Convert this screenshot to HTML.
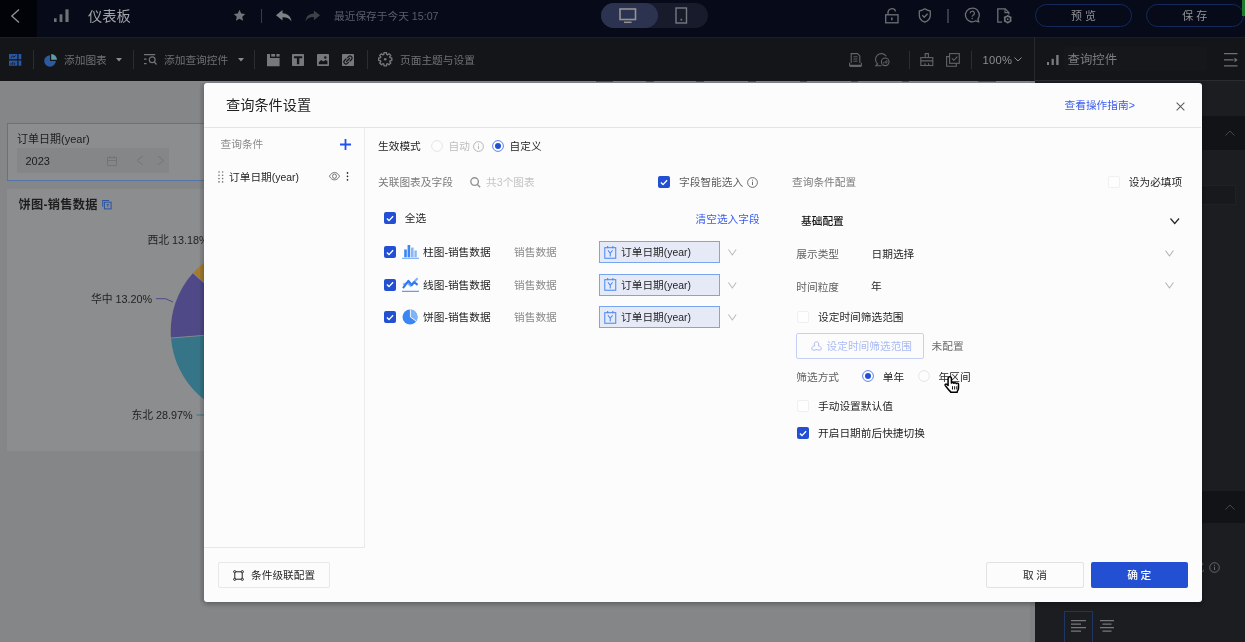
<!DOCTYPE html>
<html lang="zh-CN">
<head>
<meta charset="utf-8">
<title>仪表板</title>
<style>
*{box-sizing:border-box;margin:0;padding:0}
html,body{width:1245px;height:642px;overflow:hidden;background:#858688}
body{position:relative;will-change:transform;font-family:"Liberation Sans","Noto Sans CJK SC",sans-serif;font-size:10.7px;color:#222}
.a{position:absolute}
.t{position:absolute;white-space:nowrap;line-height:16px;height:16px;font-size:10.7px}
svg{position:absolute;overflow:visible}
/* top bar */
#topbar{left:0;top:0;width:1245px;height:37px;background:#060a19}
#back{left:0;top:0;width:37px;height:37px;background:#020308}
#toolbar{left:0;top:37px;width:1245px;height:44px;background:#141519;border-top:1px solid #1a1e2e}
.sep{position:absolute;width:1px;background:#2c2d32}
.tb{color:#707175}
/* right panel */
#rpanel{left:1035px;top:37px;width:210px;height:605px;background:#1c1d21}
/* modal */
#modal{left:204px;top:83px;width:998px;height:519px;background:#fcfcfc;border-radius:3px;box-shadow:0 2px 5px rgba(0,0,0,.32)}
.cb{position:absolute;width:12px;height:12px;border-radius:2px}
.cb.on{background:#2350d2}
.cb.off{background:#fefefe;border:1px solid #f0f0f0}
.g{color:#7b7b7b}
.sel{position:absolute;left:599px;width:121px;height:22px;background:#e6e9f6;border:1px solid #78a4f4}
</style>
</head>
<body>
<!-- canvas widgets -->
<div class="a" id="widget" style="left:7px;top:123px;width:200px;height:58px;background:#8c8d8f;border:1px solid #5474a8"></div>
<div class="a" style="left:17px;top:148px;width:152px;height:25px;background:#858688"></div>
<div class="t" style="left:17px;top:130.600px;font-size:11px;color:#1c1c1c">订单日期(year)</div>
<div class="t" style="left:25.5px;top:153px;font-size:11px;color:#1c1c1c">2023</div>
<svg style="left:106px;top:155px" width="12" height="12" viewBox="0 0 12 12" fill="none" stroke="#737477" stroke-width="1"><rect x="1.5" y="2.5" width="9" height="8"/><path d="M1.5 5.5h9M4 1v2.5M8 1v2.5"/></svg>
<svg style="left:136px;top:155px" width="30" height="12" viewBox="0 0 30 12" fill="none" stroke="#737477" stroke-width="1"><path d="M6.800 1L1.200 5.500l5.600 4.500M22 1l5.600 4.500L22 10"/></svg>

<div class="a" id="piecard" style="left:7px;top:189px;width:200.500px;height:261.500px;background:#8c8d8f"></div>
<div class="t" style="left:18.500px;top:197.300px;font-size:12.200px;letter-spacing:.28px;font-weight:700;color:#1d1d1d">饼图-销售数据</div>
<svg style="left:102px;top:199.800px" width="9.800" height="9.400" viewBox="0 0 11 11" fill="none" stroke="#2a55a0" stroke-width="1.200"><path d="M0.600 8V0.600H8"/><rect x="2.600" y="2.600" width="7.800" height="7.800"/><path d="M5 5.300h3M6.500 5.300v3" stroke-width="1"/></svg>
<svg style="left:0;top:0" width="1245" height="642" viewBox="0 0 1245 642">
  <g id="pie">
    <path d="M257.700 331 L193 273 A87 87 0 0 1 257.700 244 Z" fill="#a37c2f"/>
    <path d="M257.700 331 L171 338 A87 87 0 0 1 193 273 Z" fill="#4f4a87"/>
    <path d="M257.700 331 L257.700 418 A87 87 0 0 1 171 338 Z" fill="#367588"/>
    <path d="M257.700 331 L193 273 M257.700 331 L171 338" stroke="#8c8d8f" stroke-width="0.800"/>
    <path d="M156 298.700H165.500L173 302" fill="none" stroke="#4f4a87" stroke-width="1"/>
    <path d="M196.500 415H206" fill="none" stroke="#367588" stroke-width="1"/>
  </g>
</svg>
<div class="t" style="left:147.500px;top:232px;font-size:10.800px;color:#222">西北 13.18%</div>
<div class="t" style="left:91px;top:290.500px;font-size:10.800px;color:#222">华中 13.20%</div>
<div class="t" style="left:131.500px;top:406.500px;font-size:10.800px;color:#222">东北 28.97%</div>
<div class="a" style="left:1030px;top:81px;width:5px;height:561px;background:#7f8082"></div>
<div class="a" style="left:199.500px;top:83px;width:5px;height:519px;background:rgba(0,0,0,.05)"></div>

<div class="a" style="left:596px;top:81px;width:17px;height:1px;background:#55565a"></div><div class="a" style="left:646px;top:81px;width:8px;height:1px;background:#55565a"></div><div class="a" style="left:696px;top:81px;width:8px;height:1px;background:#55565a"></div><div class="a" style="left:748px;top:81px;width:8px;height:1px;background:#55565a"></div><div class="a" style="left:800px;top:81px;width:7px;height:1px;background:#55565a"></div><div class="a" style="left:851px;top:81px;width:7px;height:1px;background:#55565a"></div><div class="a" style="left:902px;top:81px;width:7px;height:1px;background:#55565a"></div><div class="a" style="left:978px;top:81px;width:18px;height:1px;background:#55565a"></div>
<!-- TOPBAR -->
<div class="a" id="topbar"></div>
<div class="a" id="back"></div>
<svg style="left:10px;top:8px" width="12" height="16" viewBox="0 0 12 16" fill="none" stroke="#939496" stroke-width="1.300"><path d="M9 1.500L1.800 8L9 14.500"/></svg>
<svg style="left:54px;top:8.500px" width="16" height="14" viewBox="0 0 16 14" fill="#707175"><rect x="0" y="9.300" width="2.600" height="3.700"/><rect x="5.600" y="5.300" width="2.800" height="7.700"/><rect x="11.400" y="0.300" width="3.200" height="12.700"/></svg>
<div class="t" style="left:88px;top:8px;font-size:14.200px;color:#a4a5a8">仪表板</div>
<svg style="left:232.700px;top:8.700px" width="13" height="13" viewBox="0 0 24 24" fill="#737479"><path d="M12 1.500l3.200 6.900 7.400.9-5.500 5.100 1.500 7.400L12 18.100l-6.600 3.700 1.500-7.400L1.400 9.300l7.400-.9z"/></svg>
<div class="sep" style="left:261px;top:8.500px;height:14px;background:#3b3e4a"></div>
<svg style="left:276.200px;top:9.500px" width="16" height="12" viewBox="0 0 16 12" fill="#808186"><path d="M6.500 0L0 5.200l6.500 5.200V7.200c4-.2 6.800 1 9 4.300C15 6.500 12 3.500 6.500 3.200z"/></svg>
<svg style="left:305px;top:9.700px" width="15" height="12" viewBox="0 0 16 12" fill="#404148"><path d="M9.500 0L16 5.200 9.500 10.400V7.200c-4-.2-6.800 1-9 4.300C1 6.500 4 3.500 9.500 3.200z"/></svg>
<div class="t" style="left:334px;top:8.200px;color:#5c5f6b">最近保存于今天 15:07</div>
<div class="a" style="left:600.500px;top:3px;width:107.500px;height:25px;border-radius:12.500px;background:#171b2c"></div>
<div class="a" style="left:600.500px;top:3px;width:57.500px;height:25px;border-radius:12.500px;background:#2b3351"></div>
<svg style="left:619px;top:7.500px" width="18" height="16" viewBox="0 0 18 16" fill="none" stroke="#959390" stroke-width="1.600"><rect x="1" y="1" width="15.500" height="10.500"/><path d="M5 14.300h7.600" stroke-width="1.500"/></svg>
<svg style="left:675px;top:7px" width="13" height="17" viewBox="0 0 13 17" fill="none" stroke="#77797f" stroke-width="1.400"><rect x="1" y="1" width="10.500" height="15"/><path d="M5.200 12.700h2.200M6.300 11.600v2.200" stroke-width="0.800"/></svg>
<svg style="left:884px;top:8px" width="16" height="16" viewBox="0 0 16 16" fill="none" stroke="#6f7074" stroke-width="1.300"><rect x="1.700" y="6.800" width="12.300" height="8"/><path d="M4 6.800V4.600a3.900 3.900 0 0 1 7.600-1.200"/><path d="M7.850 9.400v2.800" stroke-width="1.500"/></svg>
<svg style="left:918px;top:8px" width="14" height="15" viewBox="0 0 14 15" fill="none" stroke="#6f7074" stroke-width="1.300"><path d="M6.800.8c1.600 1.200 3.400 1.900 5.500 2.200v4.400c0 3-2.200 5.300-5.500 6.700C3.500 12.700 1.300 10.400 1.300 7.400V3C3.400 2.700 5.200 2 6.800.8z" stroke-linejoin="round"/><path d="M4.300 7.300l1.900 1.900 3.400-3.500"/></svg>
<div class="sep" style="left:947.300px;top:8.500px;height:14px;background:#3a3b41;width:1.300px"></div>
<svg style="left:964px;top:7.200px" width="17" height="17" viewBox="0 0 17 17" fill="none" stroke="#6f7074" stroke-width="1.300"><path d="M8.200 1.200a6.800 6.800 0 1 0 3.600 12.600l3 1.200-.9-3A6.800 6.800 0 0 0 8.200 1.200z" stroke-linejoin="round"/><path d="M6.200 6.300a2.100 2.100 0 1 1 3 1.900c-.7.400-1 .8-1 1.600" stroke-width="1.200"/><circle cx="8.200" cy="11.500" r=".75" fill="#6f7074" stroke="none"/></svg>
<svg style="left:997px;top:8px" width="16" height="16" viewBox="0 0 16 16" fill="none" stroke="#6f7074" stroke-width="1.300"><path d="M5 14.200H.8V.8h7.400l3.600 3.600v2"/><path d="M8 .8v3.800h3.800" stroke-width="1.100"/><circle cx="10.700" cy="11.200" r="3" stroke-width="1.500"/><circle cx="10.700" cy="11.200" r=".9" fill="#6f7074" stroke="none"/><path d="M10.700 6.900v1.300M10.700 14.200v1.300M7 9l1.100.7M13.300 12.700l1.100.7M7 13.400l1.100-.7M13.300 9.700l1.100-.7" stroke-width="1.500"/></svg>
<div class="a" style="left:1035px;top:4px;width:97px;height:23px;border-radius:11.500px;border:1px solid #14295c"></div>
<div class="t" style="left:1035px;top:7.500px;width:97px;text-align:center;color:#939497;font-size:11px;letter-spacing:3px;text-indent:3px">预览</div>
<div class="a" style="left:1146px;top:4px;width:97.500px;height:23px;border-radius:11.500px;border:1px solid #14295c"></div>
<div class="t" style="left:1146px;top:7.500px;width:97.500px;text-align:center;color:#939497;font-size:11px;letter-spacing:3px;text-indent:3px">保存</div>
<div class="a" style="left:1242px;top:0;width:3px;height:16px;background:#1f7a2c"></div>
<!-- TOOLBAR -->
<div class="a" id="toolbar"></div>
<svg style="left:8.700px;top:54px" width="13" height="12" viewBox="0 0 13 12"><g fill="#2a57a3"><rect x="0" y="0" width="8.300" height="5.200"/><rect x="9.500" y="0" width="2.800" height="5.200"/><rect x="0" y="6.500" width="8.300" height="5.200"/><rect x="9.500" y="6.500" width="2.800" height="5.200"/></g><path d="M1.800 3.700l1.800-1.600 1.300 1 1.800-1.700" fill="none" stroke="#141519" stroke-width=".9"/><path d="M2 10.800V9M3.800 10.800V8M5.600 10.800V8.600" stroke="#141519" stroke-width=".8"/></svg>
<div class="sep" style="left:32.700px;top:50px;height:18.500px"></div>
<svg style="left:44px;top:53.500px" width="14" height="13" viewBox="0 0 14 13"><path d="M6 1.200A5.800 5.800 0 1 0 11.800 7H6z" fill="#2c5aa0"/><path d="M7.200 0v5.800H13A5.800 5.800 0 0 0 7.200 0z" fill="#5a9fa8"/></svg>
<div class="t tb" style="left:64px;top:52px">添加图表</div>
<svg style="left:116px;top:57.500px" width="6" height="4" viewBox="0 0 6 4"><path d="M0 0h6L3 3.600z" fill="#8a8b8f"/></svg>
<div class="sep" style="left:132.500px;top:50px;height:18.500px"></div>
<svg style="left:143.800px;top:54.200px" width="13" height="12" viewBox="0 0 13 12" fill="none" stroke="#737478" stroke-width="1.200"><path d="M0 .6h11.200M0 5.100h2.600M0 9.600h2.600"/><circle cx="8.200" cy="5.800" r="2.900"/><path d="M10.300 8l2.300 2.500"/></svg>
<div class="t tb" style="left:164px;top:52px">添加查询控件</div>
<svg style="left:237.500px;top:57.500px" width="6" height="4" viewBox="0 0 6 4"><path d="M0 0h6L3 3.600z" fill="#8a8b8f"/></svg>
<div class="sep" style="left:254.300px;top:50px;height:18.500px"></div>
<svg style="left:266.500px;top:53.500px" width="12.600" height="12.200" viewBox="0 0 12.600 12.200" fill="#77787c"><path d="M0 0h3v3.900h9.600v8.300H0z"/><rect x="4.200" y="0" width="3.900" height="2.600"/><rect x="9.400" y="0" width="3.200" height="2.600"/></svg>
<svg style="left:292px;top:53.700px" width="12" height="12" viewBox="0 0 12 12"><rect width="12" height="12" rx=".8" fill="#77787c"/><path d="M2 2.200h8.200v2.100H7.300v6H4.900v-6H2z" fill="#141519"/></svg>
<svg style="left:317px;top:53.700px" width="12" height="12" viewBox="0 0 12 12"><rect width="12" height="12" rx=".8" fill="#77787c"/><path d="M1.800 10.200V8.300l2.400-2.200 2 1.500 2.400-1.600 1.800.9v3.300z" fill="#141519"/><circle cx="8.300" cy="3.500" r="1.200" fill="#141519"/></svg>
<svg style="left:342px;top:53.700px" width="12" height="12" viewBox="0 0 12 12"><rect width="12" height="12" rx=".8" fill="#77787c"/><g fill="none" stroke="#141519" stroke-width="1.250" stroke-linecap="round"><path d="M5.600 3.600l1-1a2.050 2.050 0 0 1 2.900 2.900L8 7M6.400 8.400l-1 1a2.050 2.050 0 0 1-2.900-2.900L4 5M4.500 7.500l3-3"/></g></svg>
<div class="sep" style="left:366.800px;top:50px;height:18.500px"></div>
<svg style="left:377.700px;top:52.400px" width="14.500" height="14.500" viewBox="0 0 14.500 14.500" fill="none" stroke="#77787c" stroke-width="1.300" stroke-linejoin="round"><path d="M5.86 2.45L5.94 0.68L8.56 0.68L8.64 2.45L9.66 2.87L10.97 1.68L12.82 3.53L11.63 4.84L12.05 5.86L13.82 5.94L13.82 8.56L12.05 8.64L11.63 9.66L12.82 10.97L10.97 12.82L9.66 11.63L8.64 12.05L8.56 13.82L5.94 13.82L5.86 12.05L4.84 11.63L3.53 12.82L1.68 10.97L2.87 9.66L2.45 8.64L0.68 8.56L0.68 5.94L2.45 5.86L2.87 4.84L1.68 3.53L3.53 1.68L4.84 2.87z"/><circle cx="7.250" cy="7.250" r="1.300" fill="#77787c" stroke="none"/></svg>
<div class="t tb" style="left:400px;top:52px">页面主题与设置</div>
<svg style="left:849px;top:52.700px" width="13" height="14" viewBox="0 0 13 14" fill="none" stroke="#636468" stroke-width="1.100"><path d="M2.200 10V.6h6.300l2.300 2.300V10"/><path d="M4.400 3.800h4.200M4.400 6h4.200M4.400 8.200h4.200" stroke-width=".9"/><path d="M.6 9.800v2.600h11.800V9.800M.6 13.500h11.800"/></svg>
<svg style="left:875px;top:53px" width="15" height="14" viewBox="0 0 15 14" fill="none" stroke="#636468" stroke-width="1.100"><path d="M11.300 3.200A5.900 5.900 0 1 0 2.600 11L.9 12.700h5.600"/><circle cx="10.200" cy="8.800" r="3.800"/><path d="M8.600 10.400V9.200M10.200 10.400V8.200M11.800 10.400V7.200" stroke-width="1"/></svg>
<div class="sep" style="left:909px;top:50.500px;height:18px"></div>
<svg style="left:920.300px;top:53.200px" width="14" height="14" viewBox="0 0 14 14" fill="none" stroke="#636468" stroke-width="1.100"><path d="M5.200 4.600V.6h3.200v4"/><rect x=".8" y="4.600" width="12" height="7.900"/><path d="M.8 7.900h12M5 12.500v-2.300M8.600 12.500v-2.300"/></svg>
<svg style="left:946px;top:53px" width="14" height="14" viewBox="0 0 14 14" fill="none" stroke="#636468" stroke-width="1.100"><rect x="3.600" y=".6" width="9.700" height="9.700"/><path d="M3.600 3.600H.6v9.700h9.700v-3"/><path d="M5.900 5.300l2 2 3.400-3.700"/></svg>
<div class="sep" style="left:971px;top:50.500px;height:18px"></div>
<div class="t" style="left:982.500px;top:52px;color:#8d8e92;font-size:11.200px;letter-spacing:.25px">100%</div>
<svg style="left:1013.500px;top:57px" width="8" height="5" viewBox="0 0 8 5" fill="none" stroke="#8d8e92" stroke-width="1"><path d="M.5.500L4 4l3.500-3.500"/></svg>
<!-- RIGHT PANEL -->
<div class="a" id="rpanel"></div>
<div class="a" style="left:1034px;top:38px;width:1px;height:43px;background:#28292e"></div><div class="a" style="left:1035px;top:38px;width:210px;height:42px;background:#141519"></div><div class="a" style="left:1063.500px;top:46.500px;width:143px;height:24.500px;background:#16171b;border-radius:2px"></div><div class="a" style="left:1035px;top:80px;width:210px;height:1px;background:#2b2c31"></div>
<svg style="left:1046.500px;top:55px" width="12" height="10" viewBox="0 0 12 10" fill="#7b7c80"><rect x="0" y="7" width="2" height="3"/><rect x="4.600" y="3.800" width="2.200" height="6.200"/><rect x="9.200" y="0" width="2.400" height="10"/></svg>
<div class="t" style="left:1067.500px;top:51.700px;font-size:12.400px;color:#7b7c80">查询控件</div>
<svg style="left:1224.300px;top:52.700px" width="14" height="13.500" viewBox="0 0 14 13.500" fill="none" stroke="#6f7074" stroke-width="1.100"><path d="M0 .6h13.500M0 6.900h9.500M0 12.900h13.500"/><path d="M10.500 4.500l3.200 2.400-3.200 2.400z" fill="#6f7074" stroke="none"/></svg>
<div class="a" style="left:1036px;top:116px;width:209px;height:33.500px;background:#121317"></div>
<svg style="left:1225px;top:130px" width="10" height="6" viewBox="0 0 10 6" fill="none" stroke="#46474c" stroke-width="1"><path d="M.5 5.500L5 1l4.500 4.500"/></svg>
<div class="a" style="left:1100px;top:184.500px;width:136px;height:20px;background:#18191d;border:1px solid #202125"></div>
<div class="a" style="left:1036px;top:491px;width:209px;height:32px;background:#121317"></div>
<svg style="left:1225px;top:504px" width="10" height="6" viewBox="0 0 10 6" fill="none" stroke="#46474c" stroke-width="1"><path d="M.5 5.500L5 1l4.500 4.500"/></svg>
<div class="t" style="left:1193.500px;top:559px;color:#5d5e62">式</div>
<svg style="left:1208.500px;top:561.500px" width="11" height="11" viewBox="0 0 11 11" fill="none" stroke="#66676b" stroke-width="1"><circle cx="5.500" cy="5.500" r="4.800"/><path d="M5.500 4.800v3.200M5.500 2.800v1"/></svg>
<div class="a" style="left:1064px;top:611px;width:29px;height:31px;border:1px solid #1e3566;border-bottom:0"></div>
<svg style="left:1071px;top:619.500px" width="15" height="12" viewBox="0 0 15 12" stroke="#77787c" stroke-width="1.300"><path d="M0 .7h15M0 4.200h10M0 7.700h15M0 11.200h10"/></svg>
<svg style="left:1100px;top:619.500px" width="14" height="12" viewBox="0 0 14 12" stroke="#77787c" stroke-width="1.300"><path d="M0 .7h14M2.500 4.200h9M0 7.700h14M2.500 11.200h9"/></svg>
<!-- MODAL -->
<div class="a" id="modal"></div>
<div class="t" style="left:226px;top:96px;height:18px;line-height:18px;font-size:14.200px;color:#1f1f1f">查询条件设置</div>
<div class="t" style="left:1064.500px;top:97.400px;color:#3b5cf0">查看操作指南&gt;</div>
<svg style="left:1175.500px;top:101.500px" width="9" height="9" viewBox="0 0 10 10" fill="none" stroke="#5a5a5a" stroke-width="1.150"><path d="M.7.700l8.600 8.600M9.300.700L.7 9.300"/></svg>
<div class="a" style="left:204px;top:126.500px;width:997px;height:1px;background:#dfe4f5"></div>
<div class="a" style="left:364px;top:127px;width:1px;height:420px;background:#ebebeb"></div>
<div class="a" style="left:204px;top:546.500px;width:161px;height:1px;background:#e3e8f6"></div>
<div class="t g" style="left:220.500px;top:136.300px;color:#8a8a8a">查询条件</div>
<svg style="left:339.500px;top:138.800px" width="11" height="11" viewBox="0 0 11 11" stroke="#2250f0" stroke-width="1.800"><path d="M5.500 0v11M0 5.500h11"/></svg>
<svg style="left:218px;top:170.500px" width="6" height="12" viewBox="0 0 6 12" fill="#707070"><circle cx="1" cy="1" r=".8"/><circle cx="4.600" cy="1" r=".8"/><circle cx="1" cy="4.300" r=".8"/><circle cx="4.600" cy="4.300" r=".8"/><circle cx="1" cy="7.600" r=".8"/><circle cx="4.600" cy="7.600" r=".8"/><circle cx="1" cy="10.900" r=".8"/><circle cx="4.600" cy="10.900" r=".8"/></svg>
<div class="t" style="left:229px;top:169px;color:#1f1f1f">订单日期<span style="font-size:10.400px">(year)</span></div>
<svg style="left:328.800px;top:172.200px" width="11" height="8.400" viewBox="0 0 12 8" preserveAspectRatio="none" fill="none" stroke="#6c6c6c" stroke-width=".95"><path d="M.5 4C2 1.500 4 .5 6 .5S10 1.500 11.500 4C10 6.500 8 7.500 6 7.500S2 6.500.5 4z"/><circle cx="6" cy="4" r="2.100"/></svg>
<svg style="left:345.700px;top:172.300px" width="3" height="9.300" viewBox="0 0 3 10" fill="#222"><circle cx="1.500" cy="1" r=".9"/><circle cx="1.500" cy="4.700" r=".9"/><circle cx="1.500" cy="8.400" r=".9"/></svg>
<div class="t" style="left:378px;top:138.400px;color:#1f1f1f">生效模式</div>
<svg style="left:431px;top:140.3px" width="12" height="12" viewBox="0 0 12 12"><circle cx="6" cy="6" r="5.400" fill="#fdfdfd" stroke="#e6e6e6" stroke-width="1"/></svg>
<div class="t" style="left:448.500px;top:138.400px;color:#bdbdbd">自动</div>
<svg style="left:473px;top:141px" width="11" height="11" viewBox="0 0 11 11" fill="none" stroke="#b5b5b5" stroke-width="1"><circle cx="5.500" cy="5.500" r="4.900"/><path d="M5.500 4.700v3.400M5.500 2.700v1"/></svg>
<svg style="left:492px;top:140.3px" width="12" height="12" viewBox="0 0 12 12"><circle cx="6" cy="6" r="5.400" fill="#fff" stroke="#5b83ee" stroke-width="1"/><circle cx="6" cy="6" r="3" fill="#2350d2"/></svg>
<div class="t" style="left:509.500px;top:138.400px;color:#1f1f1f">自定义</div>
<div class="t g" style="left:378px;top:174.400px">关联图表及字段</div>
<svg style="left:469.500px;top:177px" width="11" height="11" viewBox="0 0 11 11" fill="none" stroke="#939393" stroke-width="1.400"><circle cx="4.600" cy="4.600" r="3.800"/><path d="M7.400 7.400l2.800 2.800"/></svg>
<div class="t" style="left:486px;top:174.400px;color:#c4c4c4">共3个图表</div>
<div class="cb on" style="left:658px;top:176px"><svg style="left:2px;top:2.500px" width="8" height="7" viewBox="0 0 8 7" fill="none" stroke="#fff" stroke-width="1.350"><path d="M.9 3.500l2.100 2.100L7.100 1.200"/></svg></div>
<div class="t" style="left:679px;top:174.400px;color:#5f5f5f">字段智能选入</div>
<svg style="left:747px;top:177px" width="11" height="11" viewBox="0 0 11 11" fill="none" stroke="#6f6f6f" stroke-width="1"><circle cx="5.500" cy="5.500" r="4.900"/><path d="M5.500 4.700v3.400M5.500 2.700v1"/></svg>
<div class="cb on" style="left:384.3px;top:212.2px"><svg style="left:2px;top:2.500px" width="8" height="7" viewBox="0 0 8 7" fill="none" stroke="#fff" stroke-width="1.350"><path d="M.9 3.500l2.100 2.100L7.100 1.200"/></svg></div>
<div class="t" style="left:404.800px;top:210.300px;color:#1f1f1f">全选</div>
<div class="t" style="left:695.500px;top:210.500px;color:#3b5cf0">清空选入字段</div>
<div class="cb on" style="left:384.3px;top:246.3px"><svg style="left:2px;top:2.500px" width="8" height="7" viewBox="0 0 8 7" fill="none" stroke="#fff" stroke-width="1.350"><path d="M.9 3.500l2.100 2.100L7.100 1.200"/></svg></div>
<svg style="left:401.500px;top:244.3px" width="17" height="15" viewBox="0 0 17 15"><rect x="2.200" y="5.500" width="2.600" height="7.800" fill="#3b86f5"/><rect x="5.600" y="1" width="2.600" height="12.300" fill="#3b86f5"/><rect x="9" y="3.600" width="2.600" height="9.700" fill="#8ab6fa"/><rect x="12.400" y="6.500" width="2.400" height="6.800" fill="#8ab6fa"/><rect x="0" y="13.800" width="17" height="1" fill="#6aa2f8"/></svg>
<div class="t" style="left:423px;top:244.3px;color:#1f1f1f">柱图-销售数据</div>
<div class="t" style="left:514px;top:244.3px;color:#8a8a8a">销售数据</div>
<div class="sel" style="top:241.3px"><svg style="left:3.800px;top:3.600px" width="12.500" height="13" viewBox="0 0 13 14" fill="none" stroke="#4f8df5" stroke-width="1.150"><rect x=".6" y="1.800" width="11.800" height="11.400"/><path d="M3.700 0v2.400M9.300 0v2.400" stroke-width="1.300"/><path d="M4 4.600l2.500 3.200L9 4.600M6.500 7.800v3.400" stroke-width="1.200"/></svg><div class="t" style="left:21px;top:2px;color:#1f1f1f">订单日期<span style="font-size:10.400px">(year)</span></div></div>
<svg style="left:728px;top:249.1px" width="8.600" height="7" viewBox="0 0 10 7" preserveAspectRatio="none" fill="none" stroke="#b4b4b4" stroke-width="1.100"><path d="M.5.500L5 6l4.500-5.500"/></svg>
<div class="cb on" style="left:384.3px;top:278.8px"><svg style="left:2px;top:2.500px" width="8" height="7" viewBox="0 0 8 7" fill="none" stroke="#fff" stroke-width="1.350"><path d="M.9 3.500l2.100 2.100L7.100 1.200"/></svg></div>
<svg style="left:402px;top:276.8px" width="17" height="15" viewBox="0 0 17 15" fill="none"><path d="M1 7.600l4.800-1.800 2.600 3L15.600 1.200" stroke="#7fb0fa" stroke-width="2"/><path d="M1 11.200l5.400-7.400 3.400 4.400 2.400-3 3.400 2.600" stroke="#2f7af3" stroke-width="2.100" stroke-linejoin="round"/><rect x="0" y="13.800" width="17" height="1" fill="#3b86f5"/></svg>
<div class="t" style="left:423px;top:276.8px;color:#1f1f1f">线图-销售数据</div>
<div class="t" style="left:514px;top:276.8px;color:#8a8a8a">销售数据</div>
<div class="sel" style="top:273.8px"><svg style="left:3.800px;top:3.600px" width="12.500" height="13" viewBox="0 0 13 14" fill="none" stroke="#4f8df5" stroke-width="1.150"><rect x=".6" y="1.800" width="11.800" height="11.400"/><path d="M3.700 0v2.400M9.300 0v2.400" stroke-width="1.300"/><path d="M4 4.600l2.500 3.200L9 4.600M6.500 7.800v3.400" stroke-width="1.200"/></svg><div class="t" style="left:21px;top:2px;color:#1f1f1f">订单日期<span style="font-size:10.400px">(year)</span></div></div>
<svg style="left:728px;top:281.6px" width="8.600" height="7" viewBox="0 0 10 7" preserveAspectRatio="none" fill="none" stroke="#b4b4b4" stroke-width="1.100"><path d="M.5.500L5 6l4.500-5.500"/></svg>
<div class="cb on" style="left:384.3px;top:311.2px"><svg style="left:2px;top:2.500px" width="8" height="7" viewBox="0 0 8 7" fill="none" stroke="#fff" stroke-width="1.350"><path d="M.9 3.500l2.100 2.100L7.100 1.200"/></svg></div>
<svg style="left:401.500px;top:309.2px" width="16" height="16" viewBox="0 0 16 16"><circle cx="8" cy="8" r="7.5" fill="#3b86f5"/><path d="M8 8L8 0.5A7.5 7.5 0 0 1 14.22 12.19z" fill="#7fb3fa"/><path d="M8.4 0.5V8L14.22 12.19" fill="none" stroke="#fcfcfc" stroke-width=".9"/></svg>
<div class="t" style="left:423px;top:309.2px;color:#1f1f1f">饼图-销售数据</div>
<div class="t" style="left:514px;top:309.2px;color:#8a8a8a">销售数据</div>
<div class="sel" style="top:306.2px"><svg style="left:3.800px;top:3.600px" width="12.500" height="13" viewBox="0 0 13 14" fill="none" stroke="#4f8df5" stroke-width="1.150"><rect x=".6" y="1.800" width="11.800" height="11.400"/><path d="M3.700 0v2.400M9.300 0v2.400" stroke-width="1.300"/><path d="M4 4.600l2.500 3.200L9 4.600M6.500 7.800v3.400" stroke-width="1.200"/></svg><div class="t" style="left:21px;top:2px;color:#1f1f1f">订单日期<span style="font-size:10.400px">(year)</span></div></div>
<svg style="left:728px;top:314.0px" width="8.600" height="7" viewBox="0 0 10 7" preserveAspectRatio="none" fill="none" stroke="#b4b4b4" stroke-width="1.100"><path d="M.5.500L5 6l4.500-5.500"/></svg>
<div class="t g" style="left:792px;top:174.400px">查询条件配置</div>
<div class="cb off" style="left:1108px;top:175.7px"></div>
<div class="t" style="left:1128.800px;top:174.200px;color:#1f1f1f">设为必填项</div>
<div class="t" style="left:801px;top:213.300px;color:#111;font-weight:500">基础配置</div>
<svg style="left:1170px;top:217.800px" width="9.500" height="6.600" viewBox="0 0 10 6" preserveAspectRatio="none" fill="none" stroke="#222" stroke-width="1.300"><path d="M.5.500L5 5l4.500-4.500"/></svg>
<div class="t" style="left:796.300px;top:246.300px;color:#5f5f5f">展示类型</div>
<div class="t" style="left:871.500px;top:246.300px;color:#1f1f1f">日期选择</div>
<svg style="left:1164.6px;top:249.8px" width="8.900" height="7" viewBox="0 0 10 7" preserveAspectRatio="none" fill="none" stroke="#adadad" stroke-width="1.100"><path d="M.5.500L5 6l4.500-5.500"/></svg>
<div class="t" style="left:796.300px;top:278.800px;color:#5f5f5f">时间粒度</div>
<div class="t" style="left:871px;top:278.300px;color:#1f1f1f">年</div>
<svg style="left:1164.6px;top:282.3px" width="8.900" height="7" viewBox="0 0 10 7" preserveAspectRatio="none" fill="none" stroke="#adadad" stroke-width="1.100"><path d="M.5.500L5 6l4.500-5.500"/></svg>
<div class="cb off" style="left:797px;top:311.2px"></div>
<div class="t" style="left:818px;top:309.300px;color:#1f1f1f">设定时间筛选范围</div>
<div class="a" style="left:796px;top:333px;width:127.500px;height:25.500px;border:1px solid #c4d0f7;background:#fcfcfd;border-radius:2px"></div>
<svg style="left:810.500px;top:341px" width="11" height="11" viewBox="0 0 11 11" fill="none" stroke="#a9baf5" stroke-width="1"><path d="M5.500.8c1.300 0 2.200 1 2.200 2.300 0 .7-.2 1.200-.5 1.700 1.600.2 2.800 1 3 2.200.3 1.500-1 2.400-2.200 2.200-.8-.1-1.400-.500-2-.500h-1c-.6 0-1.200.400-2 .500C1.800 9.400.5 8.500.8 7c.2-1.200 1.400-2 3-2.200-.3-.5-.5-1-.5-1.700C3.300 1.800 4.200.8 5.500.8z"/></svg>
<div class="t" style="left:826.500px;top:338.400px;color:#a9baf5">设定时间筛选范围</div>
<div class="t" style="left:931.500px;top:338.400px;color:#6c6c6c">未配置</div>
<div class="t" style="left:796.300px;top:369.200px;color:#5f5f5f">筛选方式</div>
<svg style="left:862.2px;top:370.3px" width="12" height="12" viewBox="0 0 12 12"><circle cx="6" cy="6" r="5.400" fill="#fff" stroke="#5b83ee" stroke-width="1"/><circle cx="6" cy="6" r="3" fill="#2350d2"/></svg>
<div class="t" style="left:882.800px;top:369.200px;color:#1f1f1f">单年</div>
<svg style="left:918px;top:370.3px" width="12" height="12" viewBox="0 0 12 12"><circle cx="6" cy="6" r="5.400" fill="#fdfdfd" stroke="#e6e6e6" stroke-width="1"/></svg>
<div class="t" style="left:938.500px;top:369.200px;color:#1f1f1f">年区间</div>
<div class="cb off" style="left:797px;top:400px"></div>
<div class="t" style="left:818px;top:398px;color:#1f1f1f">手动设置默认值</div>
<div class="cb on" style="left:797px;top:427px"><svg style="left:2px;top:2.500px" width="8" height="7" viewBox="0 0 8 7" fill="none" stroke="#fff" stroke-width="1.350"><path d="M.9 3.500l2.100 2.100L7.100 1.200"/></svg></div>
<div class="t" style="left:818px;top:425px;color:#1f1f1f">开启日期前后快捷切换</div>
<svg style="left:943.600px;top:376.400px" width="17.200" height="16.500" viewBox="0 0 16 16.500" preserveAspectRatio="none"><path d="M5.300.8c-.9 0-1.500.6-1.500 1.500v7.200L2.500 8.300C1.700 7.600.5 8.600 1.200 9.600l3.300 4.400c.5.700 1 1.200 1.600 1.600v.6h6.200v-.8c.8-.9 1.200-2 1.200-3.400V8.200c0-1.200-1.600-1.500-2.100-.5-.2-1.200-1.900-1.300-2.300-.3-.2-1.100-1.800-1.200-2.200-.3V2.300c0-.9-.7-1.500-1.600-1.500z" fill="#fff" stroke="#000" stroke-width="1.400" stroke-linejoin="round"/><path d="M7.900 10.200v3.300M9.900 10.200v3.300M11.900 10.200v3.300" stroke="#000" stroke-width=".9"/></svg>
<div class="a" style="left:218px;top:562px;width:112px;height:26px;border:1px solid #e8e8e8;background:#fcfcfc;border-radius:2px"></div>
<svg style="left:232.500px;top:570px" width="11" height="11" viewBox="0 0 11 11" fill="none" stroke="#222" stroke-width="1"><path d="M2.800 1.800h5.400M1.800 2.800v5.400M9.200 2.800v5.400M2.800 9.200h5.400"/><circle cx="1.700" cy="1.700" r="1.100"/><circle cx="9.300" cy="1.700" r="1.100"/><circle cx="1.700" cy="9.300" r="1.100"/><circle cx="9.300" cy="9.300" r="1.100"/></svg>
<div class="t" style="left:251px;top:567.300px;color:#1f1f1f">条件级联配置</div>
<div class="a" style="left:986px;top:562.300px;width:98px;height:25.700px;border:1px solid #e2e2e2;background:#fcfcfc;border-radius:2px"></div>
<div class="t" style="left:986px;top:567.300px;width:98px;text-align:center;color:#1f1f1f;letter-spacing:2.500px;text-indent:2.500px">取消</div>
<div class="a" style="left:1090.500px;top:562.300px;width:97.500px;height:25.700px;background:#2350d2;border-radius:2px"></div>
<div class="t" style="left:1090.500px;top:567.300px;width:97.500px;text-align:center;color:#fff;font-weight:500;letter-spacing:2.500px;text-indent:2.500px">确定</div>
</body>
</html>
